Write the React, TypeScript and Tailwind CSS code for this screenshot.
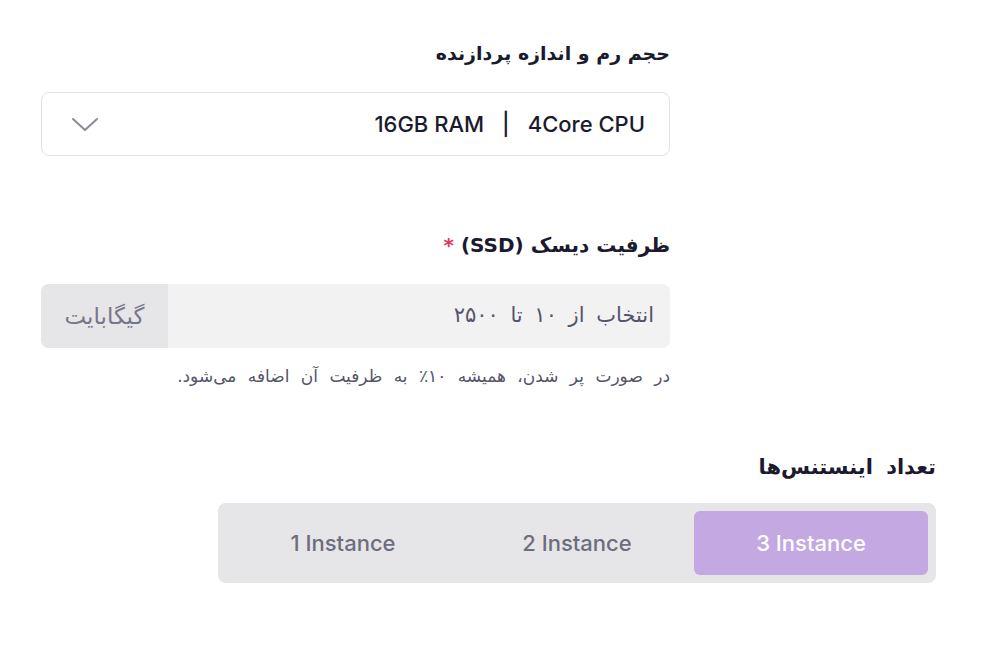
import React, { useState } from "react";

const latin = { fontFamily: "Inter, 'DejaVu Sans', sans-serif" };
const fa = { fontFamily: "'DejaVu Sans', sans-serif" };

const App: React.FC = () => {
  const [count, setCount] = useState(3);

  return (
    <div dir="rtl" className="w-[984px] h-[664px] bg-white pt-[38px]" style={fa}>
      {/* حجم رم */}
      <div className="mr-[314px] ml-[41px]">
        <h2 className="text-[19px] font-bold text-[#1b1a2e] leading-[30px]">
          حجم رم و اندازه پردازنده
        </h2>
        <div className="mt-[24px] h-[64px] rounded-lg border border-[#e3e3e6] flex items-center justify-between pr-[24px] pl-[28px]">
          <span dir="ltr" className="flex items-center text-[22px] font-medium text-[#1b1a2e]" style={latin}>
            <span>16GB RAM</span>
            <span className="px-[18px]">|</span>
            <span>4Core CPU</span>
          </span>
          <svg width="30" height="16" viewBox="0 0 30 16" fill="none">
            <path d="M3 3l12 11 12-11" stroke="#8b8a96" strokeWidth="2" strokeLinecap="round" strokeLinejoin="round" />
          </svg>
        </div>
      </div>

      {/* ظرفیت دیسک */}
      <div className="mr-[314px] ml-[41px] mt-[74px]">
        <h2 className="text-[20px] font-bold text-[#1b1a2e] leading-[30px]">
          ظرفیت دیسک (SSD) <span className="text-[#e8375b]">*</span>
        </h2>
        <div className="mt-[24px] h-[64px] rounded-lg bg-[#f2f2f3] flex overflow-hidden">
          <div className="flex-1 flex items-center pr-[16px] text-[21px] text-[#55546a] [word-spacing:5px]">
            انتخاب از ۱۰ تا ۲۵۰۰
          </div>
          <div className="w-[127px] bg-[#e6e6e8] flex items-center justify-center text-[23px] text-[#77768a]">
            گیگابایت
          </div>
        </div>
        <p className="mt-[15px] text-[17px] leading-[26px] text-[#55546a] [word-spacing:6px]">
          در صورت پر شدن، همیشه ۱۰٪ به ظرفیت آن اضافه می‌شود.
        </p>
      </div>

      {/* تعداد اینستنس‌ها */}
      <div className="mr-[48px] ml-[218px] mt-[63px]">
        <h2 className="text-[21px] font-bold text-[#1b1a2e] leading-[30px] [word-spacing:6px]">
          تعداد اینستنس‌ها
        </h2>
        <div className="mt-[21px] h-[80px] rounded-lg bg-[#e6e6e8] p-[8px] grid grid-cols-3" style={latin}>
          {[3, 2, 1].map((n) => (
            <button
              key={n}
              onClick={() => setCount(n)}
              className={
                n === count
                  ? "rounded-md bg-[#c3a8e2] text-white text-[22px] font-medium"
                  : "rounded-md text-[#6e6d7d] text-[22px] font-medium"
              }
            >
              <span dir="ltr">{n} Instance</span>
            </button>
          ))}
        </div>
      </div>
    </div>
  );
};

export default App;
